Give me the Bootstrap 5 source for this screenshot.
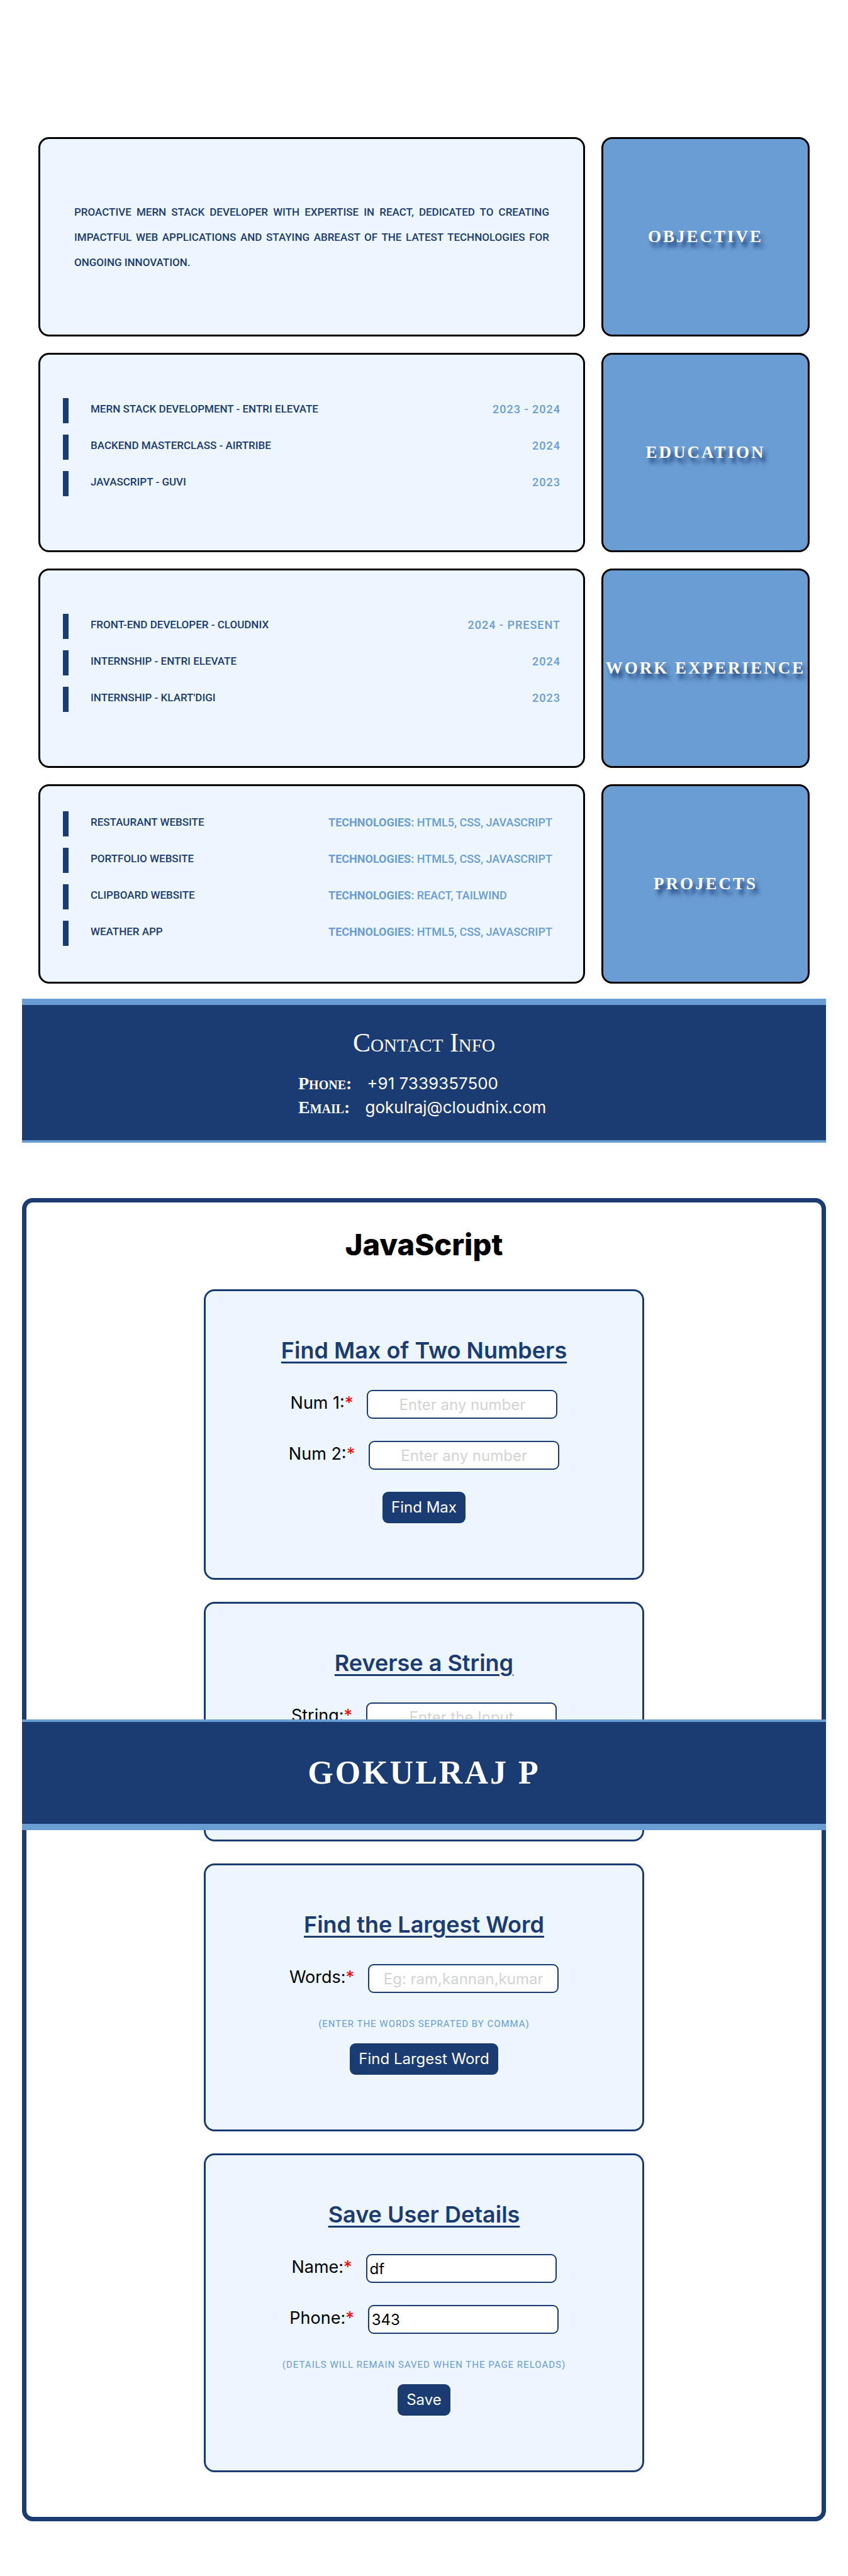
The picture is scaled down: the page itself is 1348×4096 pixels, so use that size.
<!DOCTYPE html>
<html lang="en">
<head>
<meta charset="utf-8">
<meta name="viewport" content="width=device-width, initial-scale=1">
<title>Gokulraj P</title>
<link href="https://cdn.jsdelivr.net/npm/bootstrap@5.3.0/dist/css/bootstrap.min.css" rel="stylesheet">
<style>
:root { --navy: #1b3c72; --sky: #6a9dd3; --pale: #edf6ff; }
body { font-family: Inter, "Open Sans", sans-serif; color: #000; padding: 218px 35px 88px; position: relative; }
.serif { font-family: "Liberation Serif", serif; }
.slim { font-family: Roboto, "Liberation Sans", sans-serif; text-transform: uppercase; }

/* resume grid */
.resume { padding: 0 26px; display: grid; grid-template-columns: 869fr 331fr; grid-auto-rows: minmax(317px, auto); gap: 26px; }
.panel { background: var(--pale); border: 3px solid #000; border-radius: 17px; }
.panel-text { padding: 0 54px; }
.panel-list { padding: 0 36px; }
.about { font-size: 17px; line-height: 40px; font-weight: 500; color: var(--navy); text-align: justify; }
.side { background: var(--sky); border: 3px solid #000; border-radius: 17px; }
.side h2 { font-size: 27px; font-weight: 700; letter-spacing: 3px; color: #fff; text-shadow: 5px 8px 6px var(--navy); white-space: nowrap; margin: 0; }
.entry { border-left: 9px solid var(--navy); height: 40px; margin-bottom: 18px; padding-left: 35px; font-size: 17px; line-height: 35px; color: var(--navy); }
.entry-name { font-weight: 500; }
.entry-info { color: var(--sky); font-size: 18px; letter-spacing: 1px; font-weight: 500; }
.entry-tech { width: 369px; letter-spacing: normal; white-space: nowrap; }

/* bars */
.bar-foot { background: var(--navy); color: #fff; border-top: 10px solid var(--sky); border-bottom: 4px solid var(--sky); padding: 32px 0 33px; margin: 24px 0 88px; }
.bar-foot h2 { font-size: 42px; line-height: 56px; font-variant: small-caps; margin-bottom: 18px; font-weight: 400; }
.bar-foot dl { width: 400px; font-size: 26px; line-height: 38px; }
.bar-foot dt { font-size: 28px; font-variant: small-caps; }
.bar-top { top: 2734px; left: 35px; right: 35px; background: var(--navy); border-top: 4px solid var(--sky); border-bottom: 10px solid var(--sky); height: 176px; }
.bar-top h1 { font-size: 52px; font-weight: 700; letter-spacing: 3px; color: #fff; margin: 0; }

/* script demos */
.lab { border: 7px solid var(--navy); border-radius: 17px; padding: 34px 16px 71px; }
.lab-title { font-size: 47px; line-height: 66px; font-weight: 800; margin-bottom: 38px; }
.demo-list { gap: 35px; }
.demo { max-width: 700px; background: var(--pale); border: 3px solid var(--navy); border-radius: 17px; padding: 66px 16px 87px; }
.demo h3 { font-size: 36px; line-height: 56px; font-weight: 600; color: var(--navy); text-decoration: underline; text-decoration-thickness: 3px; text-underline-offset: 5px; margin-bottom: 35px; }
.field { gap: 22px; margin-bottom: 35px; }
.field label { font-size: 27px; line-height: 42px; }
.field label span { color: red; }
.field input { width: 303px; height: 46px; border: 2px solid var(--navy); border-radius: 9px; font-size: 24px; padding: 0 4px; background: #fff; color: #000; }
.field input::placeholder { color: lightgray; text-align: center; opacity: 1; }
.hint { font-size: 15px; line-height: 28px; letter-spacing: 1px; color: var(--sky); margin-bottom: 17px; }
.go { background: var(--navy); color: #fff; border: 0; border-radius: 9px; font-size: 24px; line-height: 50px; padding: 0 14px; }
</style>
</head>
<body>
<main>
  <section class="resume">
    <div class="panel panel-text d-flex align-items-center">
      <p class="about slim mb-0">Proactive MERN stack developer with expertise in React, dedicated to creating impactful web applications and staying abreast of the latest technologies for ongoing innovation.</p>
    </div>
    <div class="side d-flex align-items-center justify-content-center"><h2 class="serif">OBJECTIVE</h2></div>

    <div class="panel panel-list slim d-flex flex-column justify-content-center">
      <div class="entry d-flex justify-content-between"><span class="entry-name">MERN Stack Development - Entri Elevate</span><span class="entry-info">2023 - 2024</span></div>
      <div class="entry d-flex justify-content-between"><span class="entry-name">Backend Masterclass - Airtribe</span><span class="entry-info">2024</span></div>
      <div class="entry d-flex justify-content-between"><span class="entry-name">JavaScript - Guvi</span><span class="entry-info">2023</span></div>
    </div>
    <div class="side d-flex align-items-center justify-content-center"><h2 class="serif">EDUCATION</h2></div>

    <div class="panel panel-list slim d-flex flex-column justify-content-center">
      <div class="entry d-flex justify-content-between"><span class="entry-name">Front-end Developer - Cloudnix</span><span class="entry-info">2024 - Present</span></div>
      <div class="entry d-flex justify-content-between"><span class="entry-name">Internship - Entri Elevate</span><span class="entry-info">2024</span></div>
      <div class="entry d-flex justify-content-between"><span class="entry-name">Internship - Klart'Digi</span><span class="entry-info">2023</span></div>
    </div>
    <div class="side d-flex align-items-center justify-content-center"><h2 class="serif">WORK EXPERIENCE</h2></div>

    <div class="panel panel-list slim d-flex flex-column justify-content-center">
      <div class="entry d-flex justify-content-between"><span class="entry-name">Restaurant Website</span><span class="entry-info entry-tech"><b>Technologies:</b> HTML5, CSS, JavaScript</span></div>
      <div class="entry d-flex justify-content-between"><span class="entry-name">Portfolio Website</span><span class="entry-info entry-tech"><b>Technologies:</b> HTML5, CSS, JavaScript</span></div>
      <div class="entry d-flex justify-content-between"><span class="entry-name">Clipboard Website</span><span class="entry-info entry-tech"><b>Technologies:</b> React, Tailwind</span></div>
      <div class="entry d-flex justify-content-between"><span class="entry-name">Weather App</span><span class="entry-info entry-tech"><b>Technologies:</b> HTML5, CSS, JavaScript</span></div>
    </div>
    <div class="side d-flex align-items-center justify-content-center"><h2 class="serif">PROJECTS</h2></div>
  </section>

  <section class="bar-foot">
    <h2 class="serif text-center">Contact Info</h2>
    <dl class="mx-auto mb-0">
      <div class="d-flex gap-4"><dt class="serif">Phone:</dt><dd class="mb-0">+91 7339357500</dd></div>
      <div class="d-flex gap-4"><dt class="serif">Email:</dt><dd class="mb-0">gokulraj@cloudnix.com</dd></div>
    </dl>
  </section>

  <section class="lab">
    <h2 class="lab-title text-center">JavaScript</h2>
    <div class="demo-list d-flex flex-column">
      <form class="demo text-center w-100 mx-auto">
        <h3>Find Max of Two Numbers</h3>
        <div class="field d-flex justify-content-center"><label for="num1">Num 1:<span>*</span></label><input id="num1" type="text" placeholder="Enter any number"></div>
        <div class="field d-flex justify-content-center"><label for="num2">Num 2:<span>*</span></label><input id="num2" type="text" placeholder="Enter any number"></div>
        <button type="button" class="go">Find Max</button>
      </form>
      <form class="demo text-center w-100 mx-auto">
        <h3>Reverse a String</h3>
        <div class="field d-flex justify-content-center"><label for="str">String:<span>*</span></label><input id="str" type="text" placeholder="Enter the Input"></div>
        <button type="button" class="go">Reverse</button>
      </form>
      <form class="demo text-center w-100 mx-auto">
        <h3>Find the Largest Word</h3>
        <div class="field d-flex justify-content-center"><label for="words">Words:<span>*</span></label><input id="words" type="text" placeholder="Eg: ram,kannan,kumar"></div>
        <p class="hint slim">(Enter the words seprated by comma)</p>
        <button type="button" class="go">Find Largest Word</button>
      </form>
      <form class="demo text-center w-100 mx-auto">
        <h3>Save User Details</h3>
        <div class="field d-flex justify-content-center"><label for="uname">Name:<span>*</span></label><input id="uname" type="text" value="df"></div>
        <div class="field d-flex justify-content-center"><label for="uphone">Phone:<span>*</span></label><input id="uphone" type="text" value="343"></div>
        <p class="hint slim">(Details will remain saved when the page reloads)</p>
        <button type="button" class="go">Save</button>
      </form>
    </div>
  </section>
</main>
<header class="bar-top position-absolute d-flex align-items-center justify-content-center"><h1 class="serif">GOKULRAJ P</h1></header>
<script src="https://cdn.jsdelivr.net/npm/bootstrap@5.3.0/dist/js/bootstrap.bundle.min.js"></script>
</body>
</html>
